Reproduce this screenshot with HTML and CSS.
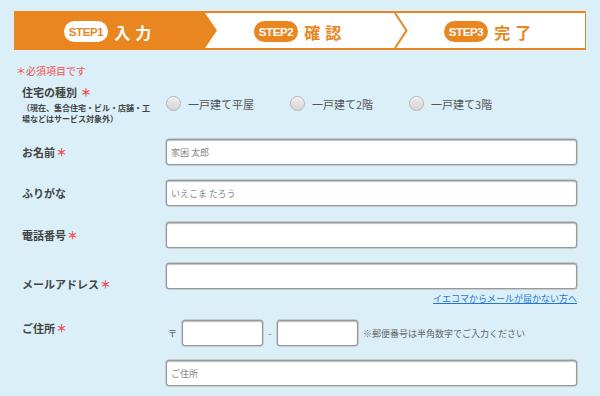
FILE: index.html
```html
<!DOCTYPE html>
<html lang="ja">
<head>
<meta charset="utf-8">
<title>入力フォーム</title>
<link rel="stylesheet" href="styles.css">
</head>
<body>
<div class="page">
  <ol class="steps">
    <li class="step step-active">
      <span class="pill">STEP1</span><span class="step-name">入力</span>
      <svg class="step-tip" width="12" height="37" viewBox="0 0 12 37" preserveAspectRatio="none"><polygon points="0,0 12,18.5 0,37" fill="#e9861f"/></svg>
    </li>
    <li class="step">
      <span class="pill">STEP2</span><span class="step-name">確認</span>
      <svg class="step-chev" width="14" height="37" viewBox="0 0 14 37" preserveAspectRatio="none"><polyline points="1,0 12.5,18.5 1,37" fill="none" stroke="#e9861f" stroke-width="2"/></svg>
    </li>
    <li class="step">
      <span class="pill">STEP3</span><span class="step-name">完了</span>
    </li>
  </ol>

  <p class="req-note">＊必須項目です</p>

  <form class="form">
    <div class="row row-kind">
      <div class="label">
        <div class="label-title">住宅の種別 <span class="req">＊</span></div>
        <div class="label-sub">（現在、集合住宅・ビル・店舗・工場などはサービス対象外）</div>
      </div>
      <div class="radios">
        <label class="radio"><span class="radio-dot"></span>一戸建て平屋</label>
        <label class="radio"><span class="radio-dot"></span>一戸建て2階</label>
        <label class="radio"><span class="radio-dot"></span>一戸建て3階</label>
      </div>
    </div>

    <div class="row">
      <div class="label">お名前<span class="req">＊</span></div>
      <div class="field"><div class="input"><span class="ph">家困 太郎</span></div></div>
    </div>

    <div class="row">
      <div class="label">ふりがな</div>
      <div class="field"><div class="input"><span class="ph">いえこま たろう</span></div></div>
    </div>

    <div class="row row-tel">
      <div class="label">電話番号<span class="req">＊</span></div>
      <div class="field"><div class="input"></div></div>
    </div>

    <div class="row">
      <div class="label">メールアドレス<span class="req">＊</span></div>
      <div class="field">
        <div class="input"></div>
        <div class="help-link"><a href="#">イエコマからメールが届かない方へ</a></div>
      </div>
    </div>

    <div class="row row-addr">
      <div class="label label-top">ご住所<span class="req">＊</span></div>
      <div class="field">
        <div class="postal">
          <span class="postal-mark">〒</span>
          <div class="input input-zip"></div>
          <span class="postal-dash">-</span>
          <div class="input input-zip"></div>
          <span class="postal-note">※郵便番号は半角数字でご入力ください</span>
        </div>
        <div class="input input-addr"><span class="ph">ご住所</span></div>
      </div>
    </div>
  </form>
</div>
</body>
</html>
```
FILE: styles.css
```css
html, body {
  margin: 0;
  padding: 0;
}
body {
  background: #daeff8;
  font-family: "Noto Sans CJK JP", "Noto Sans", sans-serif;
  color: #444;
  width: 600px;
  height: 396px;
  overflow: hidden;
}
.page {
  padding: 11px 14px 0 14px;
}

/* Steps */
.steps {
  list-style: none;
  margin: 0;
  padding: 0;
  display: flex;
  height: 39px;
  box-sizing: border-box;
  border: 1px solid #e9861f;
  border-top-width: 2px;
  border-bottom-width: 2px;
  background: #fff;
}
.step {
  flex: 1;
  position: relative;
  display: flex;
  align-items: center;
  justify-content: center;
  gap: 6px;
  padding-top: 2px;
  box-sizing: border-box;
}
.step-active {
  background: #e9861f;
}
.step-tip {
  position: absolute;
  left: 100%;
  top: 0;
  height: 100%;
  z-index: 2;
}
.step-chev {
  position: absolute;
  left: calc(100% - 1px);
  top: 0;
  height: 100%;
  z-index: 2;
}
.pill {
  display: inline-flex;
  align-items: center;
  justify-content: center;
  height: 21px;
  padding: 0 5px;
  border-radius: 11px;
  background: #e9861f;
  color: #fff;
  font-family: "Liberation Sans", Arial, sans-serif;
  font-weight: bold;
  font-size: 11.5px;
  letter-spacing: -0.4px;
}
.step-active .pill {
  background: #fff;
  color: #e9861f;
}
.step-name {
  font-size: 16px;
  font-weight: bold;
  letter-spacing: 5px;
  color: #e9861f;
  line-height: 20px;
}
.step-active .step-name {
  color: #fff;
}

/* Note */
.req-note {
  margin: 13px 0 0 2px;
  font-size: 10px;
  line-height: 16px;
  color: #f2514f;
}

/* Form */
.form {
  margin: 4px 9px 0 8px;
  display: flex;
  flex-direction: column;
  gap: 15px;
}
.row {
  display: grid;
  grid-template-columns: 144px 1fr;
  align-items: center;
}
.row-tel {
  margin-top: 1px;
}
.label {
  font-size: 11px;
  font-weight: bold;
  color: #444;
  line-height: 16px;
}
.label-top {
  align-self: start;
}
.label-title {
  line-height: 18px;
}
.req {
  color: #f2514f;
  font-weight: bold;
  margin-left: 1px;
}
.label-sub {
  width: 132px;
  font-size: 8px;
  line-height: 11px;
  font-weight: bold;
  color: #444;
  margin-top: 1px;
}

/* Radios */
.radios {
  display: flex;
  align-items: center;
  gap: 36px;
}
.radio {
  display: flex;
  align-items: center;
  gap: 7px;
  font-size: 11px;
  color: #555;
}
.radio-dot {
  width: 15px;
  height: 15px;
  box-sizing: border-box;
  border-radius: 50%;
  border: 1px solid #b4b4b4;
  background: linear-gradient(#ececec, #d6d6d6);
  box-shadow: inset 0 1px 1px rgba(255,255,255,0.8);
}

/* Inputs */
.field {
  display: flex;
  flex-direction: column;
}
.input {
  height: 26px;
  box-sizing: border-box;
  background: #fff;
  border: 1px solid #999;
  border-radius: 3px;
  box-shadow: inset 0 1px 1px rgba(0,0,0,0.25), 0 0 0 0.5px #aaa;
  display: flex;
  align-items: center;
  padding: 0 4px;
}
.ph {
  font-size: 9px;
  color: #888;
}
.help-link {
  text-align: right;
  margin-top: 3px;
  font-size: 9px;
  line-height: 13px;
}
.help-link a {
  color: #1a78d6;
  text-decoration: underline;
}

/* Postal */
.postal {
  display: flex;
  align-items: center;
}
.postal-mark {
  font-size: 9px;
  color: #555;
  margin: 0 5px 0 2px;
}
.input-zip {
  width: 81px;
}
.postal-dash {
  font-size: 9px;
  color: #777;
  width: 14px;
  text-align: center;
}
.postal-note {
  font-size: 9px;
  color: #666;
  margin-left: 5px;
}
.input-addr {
  margin-top: 14px;
}
```
